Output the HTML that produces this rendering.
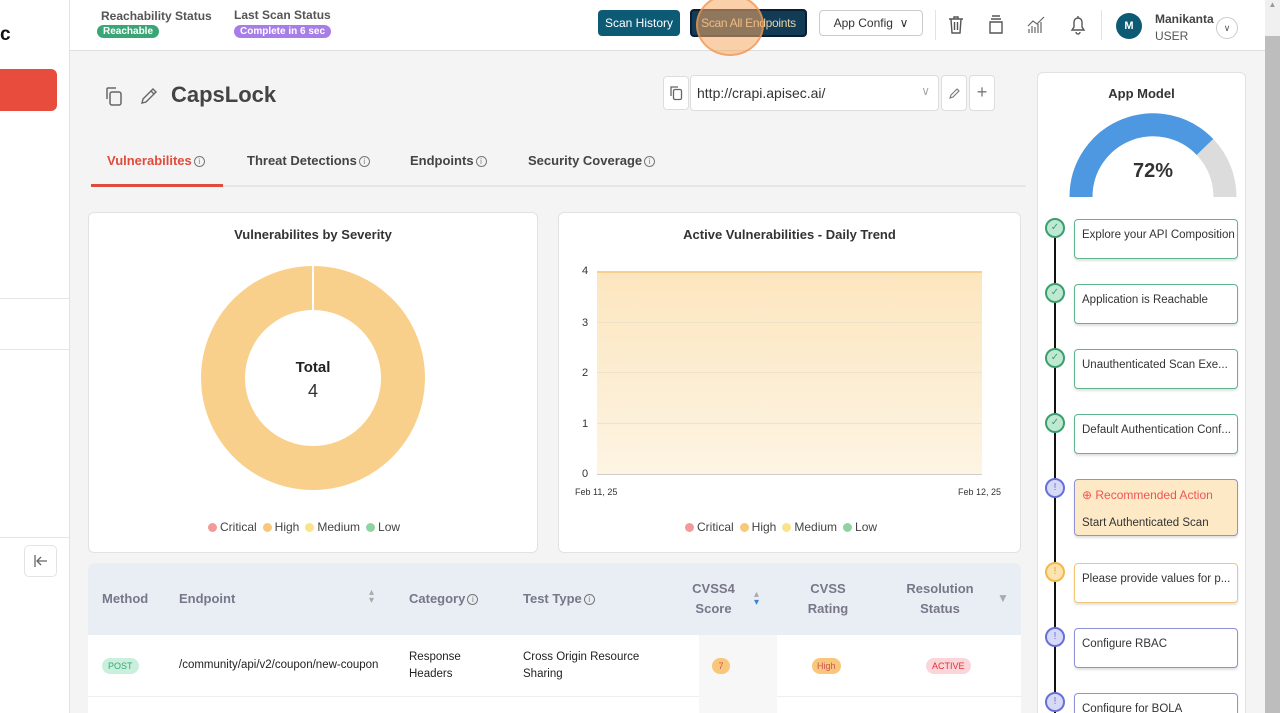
<!DOCTYPE html>
<html><head><meta charset="utf-8"><style>
*{box-sizing:border-box;margin:0;padding:0}
html,body{width:1280px;height:713px;overflow:hidden}
body{background:#f4f4f5;font-family:"Liberation Sans",Arial,sans-serif;color:#333;position:relative}
.abs{position:absolute}
.side{left:0;top:0;width:70px;height:713px;background:#fff;border-right:1px solid #e3e3e3}
.hdr{left:70px;top:0;width:1195px;height:51px;background:#fff;border-bottom:1px solid #ddd}
.badge{font-size:10px;color:#fff;border-radius:8px;padding:1px 6px;font-weight:bold}
.btn{border-radius:4px;font-size:12px;display:flex;align-items:center;justify-content:center}
.card{background:#fff;border:1px solid #e2e2e2;border-radius:6px}
.tab{font-size:13px;font-weight:bold;color:#444;top:153px}
.info{display:inline-block;width:11px;height:11px;border:1px solid #777;border-radius:50%;font-size:8px;line-height:9px;text-align:center;font-weight:normal;vertical-align:1px;margin-left:2px;color:#777}
.leg{font-size:12px;color:#444}
.dot{display:inline-block;width:9px;height:9px;border-radius:50%;margin:0 3px 0 6px;vertical-align:-1px}
.th{font-size:13px;font-weight:bold;color:#778;text-align:center;line-height:20px}
.step{left:1074px;width:164px;height:40px;border:1px solid #5fb58f;border-radius:4px;background:#fff;font-size:11.5px;color:#333;padding:9px 7px;box-shadow:0 2px 2px rgba(0,0,0,.12);white-space:nowrap;overflow:hidden}
.circ{left:1045px;width:20px;height:20px;border-radius:50%;border:2px solid #3a9e6e;background:#bfe8d2;font-size:10px;text-align:center;line-height:16px;color:#3a9e6e}
.circ.b{border-color:#6670d8;background:#d6daf6;color:#6670d8}
.circ.y{border-color:#f2b84b;background:#fde3ae;color:#e9a12a}
</style></head><body>
<div class="abs side">
<div class="abs" style="left:0;top:24px;font-size:19px;font-weight:bold;color:#111">c</div>
<div class="abs" style="left:0;top:69px;width:57px;height:42px;background:#e84c3d;border-radius:0 6px 6px 0"></div>
<div class="abs" style="left:0;top:298px;width:70px;border-top:1px solid #e5e5e5"></div>
<div class="abs" style="left:0;top:349px;width:70px;border-top:1px solid #e5e5e5"></div>
<div class="abs" style="left:0;top:537px;width:70px;border-top:1px solid #e5e5e5"></div>
<div class="abs" style="left:24px;top:545px;width:33px;height:32px;border:1px solid #e3e3e3;border-radius:5px"><svg width="31" height="30"><path d="M10 9v12M22 15H12M16 11l-4 4 4 4" fill="none" stroke="#666" stroke-width="1.3"/></svg></div>
</div>
<div class="abs hdr">
<div class="abs" style="left:31px;top:9px;font-size:12px;font-weight:bold;color:#555">Reachability Status</div>
<div class="abs badge" style="left:27px;top:25px;background:#3aa675">Reachable</div>
<div class="abs" style="left:164px;top:8px;font-size:12px;font-weight:bold;color:#555">Last Scan Status</div>
<div class="abs badge" style="left:164px;top:25px;background:#a77ee8">Complete in 6 sec</div>
<div class="abs btn" style="left:528px;top:10px;width:82px;height:26px;background:#0d5a75;color:#fff">Scan History</div>
<div class="abs btn" style="left:620px;top:9px;width:117px;height:28px;background:#123b56;border:2px solid #0c1d34;color:#e6d2a6;letter-spacing:-0.3px">Scan All Endpoints</div>
<div class="abs" style="left:626px;top:-6px;width:68px;height:62px;border-radius:50%;background:rgba(245,170,100,.55);border:2px solid rgba(240,150,80,.7)"></div>
<div class="abs btn" style="left:749px;top:10px;width:104px;height:26px;border:1px solid #ccc;color:#333;background:#fff">App Config &nbsp;∨</div>
<div class="abs" style="left:865px;top:10px;height:30px;border-left:1px solid #e3e3e3"></div>
<svg class="abs" style="left:876px;top:15px" width="20" height="20"><path d="M3 4h14M8 4V2h4v2M5 4l1 14h8l1-14M8.5 7v8M11.5 7v8" fill="none" stroke="#555" stroke-width="1.4"/></svg>
<svg class="abs" style="left:916px;top:14px" width="20" height="22"><path d="M6 2h8M5 5h10M4 8h12v11H4z" fill="none" stroke="#555" stroke-width="1.4"/></svg>
<svg class="abs" style="left:956px;top:15px" width="20" height="20"><path d="M3 18V14M6 18V11M9 18V12M12 18V9M15 18V7M2 11l5-5 4 3 7-7" fill="none" stroke="#666" stroke-width="1.2"/></svg>
<svg class="abs" style="left:998px;top:14px" width="20" height="22"><path d="M4 16h12l-2-3V8a4 4 0 0 0-8 0v5zM8 18a2 2 0 0 0 4 0M10 2v2" fill="none" stroke="#555" stroke-width="1.4"/></svg>
<div class="abs" style="left:1031px;top:10px;height:30px;border-left:1px solid #e3e3e3"></div>
<div class="abs" style="left:1046px;top:13px;width:26px;height:26px;border-radius:50%;background:#0d5a75;color:#fff;font-size:11px;font-weight:bold;text-align:center;line-height:26px">M</div>
<div class="abs" style="left:1085px;top:12px;font-size:12px;font-weight:bold;color:#444">Manikanta</div>
<div class="abs" style="left:1085px;top:29px;font-size:12px;color:#555">USER</div>
<div class="abs" style="left:1146px;top:17px;width:22px;height:22px;border:1px solid #ccc;border-radius:50%;font-size:9px;text-align:center;line-height:20px;color:#555">∨</div>
</div>
<div class="abs" style="left:1265px;top:0;width:15px;height:713px;background:#bdbdbd"><div style="height:36px;background:#f0f0f0;font-size:8px;color:#999;text-align:center">▲</div></div>

<svg class="abs" style="left:102px;top:85px" width="24" height="24"><path d="M5 14V4a1 1 0 0 1 1-1h8" fill="none" stroke="#666" stroke-width="1.5"/><rect x="8" y="7" width="11" height="13" rx="2" fill="none" stroke="#666" stroke-width="1.5"/></svg>
<svg class="abs" style="left:138px;top:85px" width="22" height="22"><path d="M4 18l1-4L15 4l3 3L8 17zM13 6l3 3" fill="none" stroke="#666" stroke-width="1.4"/></svg>
<div class="abs" style="left:171px;top:82px;font-size:22px;font-weight:bold;color:#444">CapsLock</div>

<div class="abs" style="left:663px;top:76px;width:26px;height:34px;background:#fff;border:1px solid #ddd;border-radius:4px"><svg width="24" height="32"><path d="M7 19V10h7" fill="none" stroke="#666" stroke-width="1.3"/><rect x="9.5" y="12.5" width="8" height="10" rx="1.5" fill="none" stroke="#666" stroke-width="1.3"/></svg></div>
<div class="abs" style="left:690px;top:75px;width:249px;height:36px;background:#fff;border:1px solid #ddd;border-radius:4px;font-size:14px;padding:9px 6px;color:#333">http://crapi.apisec.ai/<span style="position:absolute;right:8px;top:8px;color:#aaa;font-size:12px">∨</span></div>
<div class="abs" style="left:941px;top:75px;width:26px;height:36px;background:#fff;border:1px solid #ddd;border-radius:4px"><svg width="24" height="34"><path d="M8 22l1-3 6-6 2 2-6 6z" fill="none" stroke="#777" stroke-width="1.1"/></svg></div>
<div class="abs" style="left:969px;top:75px;width:26px;height:36px;background:#fff;border:1px solid #ddd;border-radius:4px;text-align:center;line-height:33px;font-size:18px;color:#777">+</div>

<div class="abs tab" style="left:107px;color:#e04b3c">Vulnerabilites<span class="info">i</span></div>
<div class="abs tab" style="left:247px">Threat Detections<span class="info">i</span></div>
<div class="abs tab" style="left:410px">Endpoints<span class="info">i</span></div>
<div class="abs tab" style="left:528px">Security Coverage<span class="info">i</span></div>
<div class="abs" style="left:91px;top:185px;width:935px;border-top:2px solid #e6e6e9"></div>
<div class="abs" style="left:91px;top:184px;width:132px;border-top:3px solid #e04b3c"></div>

<div class="abs card" style="left:88px;top:212px;width:450px;height:341px">
<div style="text-align:center;font-size:13px;font-weight:bold;margin-top:14px;color:#333">Vulnerabilites by Severity</div>
<svg class="abs" style="left:112px;top:53px" width="224" height="224"><circle cx="112" cy="112" r="90" fill="none" stroke="#f9d08b" stroke-width="44"/><line x1="112" y1="0" x2="112" y2="44" stroke="#fff" stroke-width="2"/></svg>
<div class="abs" style="left:174px;top:146px;width:100px;text-align:center;font-size:15px;font-weight:bold;color:#222">Total</div>
<div class="abs" style="left:174px;top:168px;width:100px;text-align:center;font-size:18px;color:#333">4</div>
<div class="abs leg" style="left:113px;top:307px"><span class="dot" style="background:#f29a9a"></span>Critical<span class="dot" style="background:#f9c77a"></span>High<span class="dot" style="background:#f9e48a"></span>Medium<span class="dot" style="background:#8fd4a0"></span>Low</div>
</div>

<div class="abs card" style="left:558px;top:212px;width:463px;height:341px">
<div style="text-align:center;font-size:13px;font-weight:bold;margin-top:14px;color:#333">Active Vulnerabilities - Daily Trend</div>
<div class="abs" style="left:38px;top:58px;width:385px;height:203px;background:linear-gradient(#fce6bf,#fdf4e3);border-top:2px solid #f9d08b"></div>
<div class="abs" style="left:38px;top:109px;width:385px;border-top:1px solid #f0e2c8"></div>
<div class="abs" style="left:38px;top:159px;width:385px;border-top:1px solid #f0e2c8"></div>
<div class="abs" style="left:38px;top:210px;width:385px;border-top:1px solid #f0e2c8"></div>
<div class="abs" style="left:38px;top:261px;width:385px;border-top:1px solid #ccc"></div>
<div class="abs" style="left:23px;top:53px;font-size:11px;color:#333;line-height:1">4</div>
<div class="abs" style="left:23px;top:104px;font-size:11px;color:#333">3</div>
<div class="abs" style="left:23px;top:154px;font-size:11px;color:#333">2</div>
<div class="abs" style="left:23px;top:205px;font-size:11px;color:#333">1</div>
<div class="abs" style="left:23px;top:255px;font-size:11px;color:#333">0</div>
<div class="abs" style="left:16px;top:274px;font-size:9px;color:#333">Feb 11, 25</div>
<div class="abs" style="left:399px;top:274px;font-size:9px;color:#333">Feb 12, 25</div>
<div class="abs leg" style="left:120px;top:307px"><span class="dot" style="background:#f29a9a"></span>Critical<span class="dot" style="background:#f9c77a"></span>High<span class="dot" style="background:#f9e48a"></span>Medium<span class="dot" style="background:#8fd4a0"></span>Low</div>
</div>

<div class="abs" style="left:88px;top:563px;width:933px;height:150px;background:#fff;border-radius:6px 6px 0 0;overflow:hidden">
<div class="abs" style="left:0;top:0;width:933px;height:72px;background:#e9eef4"></div>
<div class="abs" style="left:0;top:133px;width:933px;border-top:1px solid #eee"></div>
<div class="abs" style="left:611px;top:72px;width:78px;height:80px;background:#f7f7f7"></div>
<div class="abs th" style="left:14px;top:26px">Method</div>
<div class="abs th" style="left:91px;top:26px">Endpoint</div>
<div class="abs" style="left:281px;top:26px;font-size:10px;color:#aaa;line-height:8px">▴<br>▾</div>
<div class="abs th" style="left:321px;top:26px">Category<span class="info">i</span></div>
<div class="abs th" style="left:435px;top:26px">Test Type<span class="info">i</span></div>
<div class="abs th" style="left:598px;top:16px;width:55px">CVSS4<br>Score</div>
<div class="abs" style="left:666px;top:28px;font-size:10px;line-height:8px;color:#aaa">▴<br><span style="color:#3d7fd9">▾</span></div>
<div class="abs th" style="left:710px;top:16px;width:60px">CVSS<br>Rating</div>
<div class="abs th" style="left:812px;top:16px;width:80px">Resolution<br>Status</div>
<div class="abs" style="left:909px;top:28px;font-size:12px;color:#aaa">▼</div>
<div class="abs" style="left:14px;top:95px;font-size:9px;color:#3aa675;background:#c9f0dc;border-radius:8px;padding:3px 6px">POST</div>
<div class="abs" style="left:91px;top:96px;font-size:11.5px;color:#222">/community/api/v2/coupon/new-coupon</div>
<div class="abs" style="left:321px;top:86px;font-size:11.5px;line-height:17px;color:#222">Response<br>Headers</div>
<div class="abs" style="left:435px;top:86px;font-size:11.5px;line-height:17px;color:#222">Cross Origin Resource<br>Sharing</div>
<div class="abs" style="left:624px;top:95px;width:18px;height:16px;border-radius:8px;background:#f9c77a;font-size:9px;text-align:center;line-height:16px;color:#c55">7</div>
<div class="abs" style="left:724px;top:95px;font-size:9px;background:#f9c77a;color:#c55;border-radius:8px;padding:3px 5px">High</div>
<div class="abs" style="left:838px;top:95px;font-size:9px;background:#fbd5d9;color:#d33;border-radius:8px;padding:3px 6px">ACTIVE</div>
</div>

<div class="abs card" style="left:1037px;top:72px;width:209px;height:650px">
<div style="text-align:center;font-size:13px;font-weight:bold;margin-top:13px;color:#333">App Model</div>
</div>
<svg class="abs" style="left:1060px;top:106px" width="186" height="100">
<path d="M21 91 A72 72 0 0 1 145 41" fill="none" stroke="#4d98e0" stroke-width="23"/>
<path d="M145 41 A72 72 0 0 1 165 91" fill="none" stroke="#dcdcdc" stroke-width="23"/>
</svg>
<div class="abs" style="left:1113px;top:160px;width:80px;text-align:center;font-size:20px;font-weight:bold;color:#333">72%</div>
<div class="abs" style="left:1054px;top:230px;height:483px;border-left:2px solid #111"></div>
<div class="abs circ" style="top:218px">✓</div><div class="abs step" style="top:219px">Explore your API Composition</div>
<div class="abs circ" style="top:283px">✓</div><div class="abs step" style="top:284px">Application is Reachable</div>
<div class="abs circ" style="top:348px">✓</div><div class="abs step" style="top:349px">Unauthenticated Scan Exe...</div>
<div class="abs circ" style="top:413px">✓</div><div class="abs step" style="top:414px">Default Authentication Conf...</div>
<div class="abs circ b" style="top:478px">!</div><div class="abs step" style="top:479px;height:57px;background:#fde9c6;border-color:#8f93d6;padding:3px 7px;line-height:24px"><span style="color:#e55;font-size:12px">⊕ Recommended Action</span><br><span style="line-height:30px">Start Authenticated Scan</span></div>
<div class="abs circ y" style="top:562px">!</div><div class="abs step" style="top:563px;border-color:#f0c77a">Please provide values for p...</div>
<div class="abs circ b" style="top:627px">!</div><div class="abs step" style="top:628px;border-color:#8f93d6">Configure RBAC</div>
<div class="abs circ b" style="top:692px">!</div><div class="abs step" style="top:693px;border-color:#8f93d6">Configure for BOLA</div>
</body></html>
